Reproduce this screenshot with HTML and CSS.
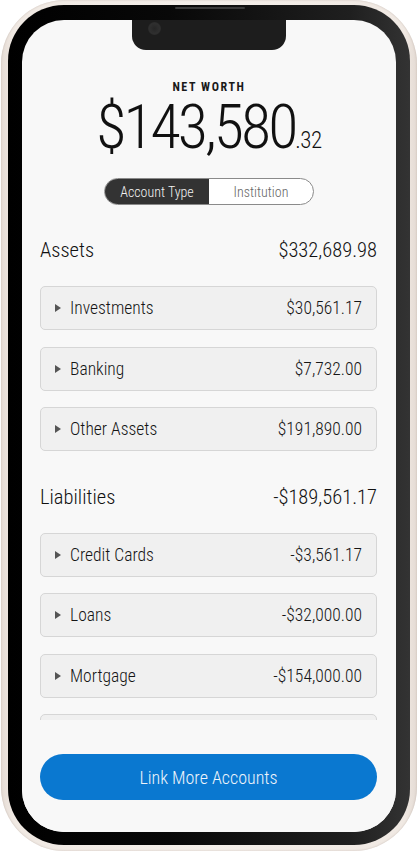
FILE: index.html
```html
<!DOCTYPE html>
<html lang="en">
<head>
<meta charset="utf-8">
<title>Net Worth</title>
<link rel="stylesheet" href="styles.css">
</head>
<body>
<div class="phone">
  <div class="bezel">
    <div class="speaker"></div>
    <div class="screen">
      <div class="notch"><span class="camera"></span></div>
      <header class="summary">
        <div class="label">NET WORTH</div>
        <div class="total">$143,580<span class="cents">.32</span></div>
        <div class="toggle">
          <span class="seg active">Account Type</span>
          <span class="seg">Institution</span>
        </div>
      </header>
      <main class="list">
        <div class="section-head"><span>Assets</span><span>$332,689.98</span></div>
        <div class="card"><span class="name"><i class="tri"></i>Investments</span><span>$30,561.17</span></div>
        <div class="card"><span class="name"><i class="tri"></i>Banking</span><span>$7,732.00</span></div>
        <div class="card"><span class="name"><i class="tri"></i>Other Assets</span><span>$191,890.00</span></div>
        <div class="section-head liab"><span>Liabilities</span><span>-$189,561.17</span></div>
        <div class="card"><span class="name"><i class="tri"></i>Credit Cards</span><span>-$3,561.17</span></div>
        <div class="card"><span class="name"><i class="tri"></i>Loans</span><span>-$32,000.00</span></div>
        <div class="card"><span class="name"><i class="tri"></i>Mortgage</span><span>-$154,000.00</span></div>
        <div class="card"><span class="name"><i class="tri"></i>Other Liabilities</span><span>-$0.00</span></div>
      </main>
      <footer class="footer">
        <button class="link-btn">Link More Accounts</button>
      </footer>
    </div>
  </div>
</div>
</body>
</html>
```
FILE: styles.css
```css
* { box-sizing: border-box; }
html, body { margin: 0; padding: 0; background: #ffffff; }
body {
  font-family: "Roboto Condensed", "Liberation Sans Narrow", sans-serif;
  font-weight: 300;
  color: #222;
}
.phone {
  width: 416px;
  height: 851px;
  margin-left: 1px;
  border-radius: 64px;
  background: linear-gradient(90deg, #e6ddd6 0%, #f0e9e3 3%, #f4efea 50%, #f0e9e3 97%, #e4dbd4 100%);
  padding: 5px 7px 6px 7px;
  box-shadow: inset 0 0 2px rgba(120, 100, 90, 0.35);
}
.bezel {
  position: relative;
  height: 100%;
  border-radius: 56px;
  background: linear-gradient(90deg, #000 0%, #080808 40%, #1f1f1f 85%, #333 100%);
  padding: 15px 14px 13px 14px;
}
.speaker {
  position: absolute;
  top: 2px;
  left: 167px;
  width: 70px;
  height: 2px;
  border-radius: 1px;
  background: #3a3a3a;
}
.screen {
  position: relative;
  height: 100%;
  border-radius: 42px;
  background: #f8f8f8;
  overflow: hidden;
  display: flex;
  flex-direction: column;
}
.notch {
  position: absolute;
  top: 0;
  left: 110px;
  width: 154px;
  height: 30px;
  background: #1d1d1d;
  border-radius: 0 0 14px 14px;
}
.camera {
  position: absolute;
  left: 16px;
  top: 2px;
  width: 13px;
  height: 13px;
  border-radius: 50%;
  background: radial-gradient(circle at 50% 50%, #262626 0%, #2f2f2f 55%, #232323 100%);
}
.summary {
  padding-top: 60px;
  display: flex;
  flex-direction: column;
  align-items: center;
  flex-shrink: 0;
}
.label {
  font-family: "Roboto Condensed", sans-serif;
  font-weight: 700;
  font-size: 12px;
  line-height: 14px;
  letter-spacing: 1.6px;
  color: #1a1a1a;
}
.total {
  margin-top: 4px;
  height: 60px;
  font-size: 62px;
  line-height: 58px;
  letter-spacing: -3px;
  color: #111;
  white-space: nowrap;
}
.cents {
  font-size: 23px;
  line-height: 0;
  letter-spacing: -0.5px;
}
.toggle {
  margin-top: 20px;
  display: flex;
  width: 210px;
  height: 27px;
  border: 1px solid #8a8a8a;
  border-radius: 14px;
  overflow: hidden;
  background: #fff;
}
.seg {
  flex: 1;
  display: flex;
  align-items: center;
  justify-content: center;
  font-size: 14px;
  font-weight: 340;
  color: #666;
}
.seg.active {
  background: #333;
  color: #f2f2f2;
}
.list {
  margin-top: 27px;
  flex: 1;
  min-height: 0;
  overflow: hidden;
  padding: 0 19px 0 18px;
  display: flex;
  flex-direction: column;
}
.section-head {
  display: flex;
  justify-content: space-between;
  align-items: center;
  height: 36px;
  margin-bottom: 18px;
  font-size: 20.5px;
  font-weight: 340;
  color: #111;
  flex-shrink: 0;
}
.section-head.liab {
  margin-top: 11px;
}
.card {
  flex-shrink: 0;
  height: 44px;
  margin-bottom: 16.5px;
  display: flex;
  justify-content: space-between;
  align-items: center;
  padding: 0 14px;
  background: #f0f0f0;
  border: 1px solid #d6d6d6;
  border-radius: 5px;
  font-size: 17.5px;
  font-weight: 340;
  color: #151515;
}
.name {
  display: flex;
  align-items: center;
}
.tri {
  display: inline-block;
  width: 0;
  height: 0;
  border-top: 4px solid transparent;
  border-bottom: 4px solid transparent;
  border-left: 6px solid #555;
  margin-right: 9px;
}
.footer {
  flex-shrink: 0;
  padding: 34px 19px 32px 18px;
  background: #f8f8f8;
}
.link-btn {
  display: block;
  width: 100%;
  height: 46px;
  border: none;
  border-radius: 23px;
  background: #0a78d0;
  color: #eef4fb;
  font-family: "Roboto Condensed", sans-serif;
  font-weight: 320;
  font-size: 18px;
}
```
